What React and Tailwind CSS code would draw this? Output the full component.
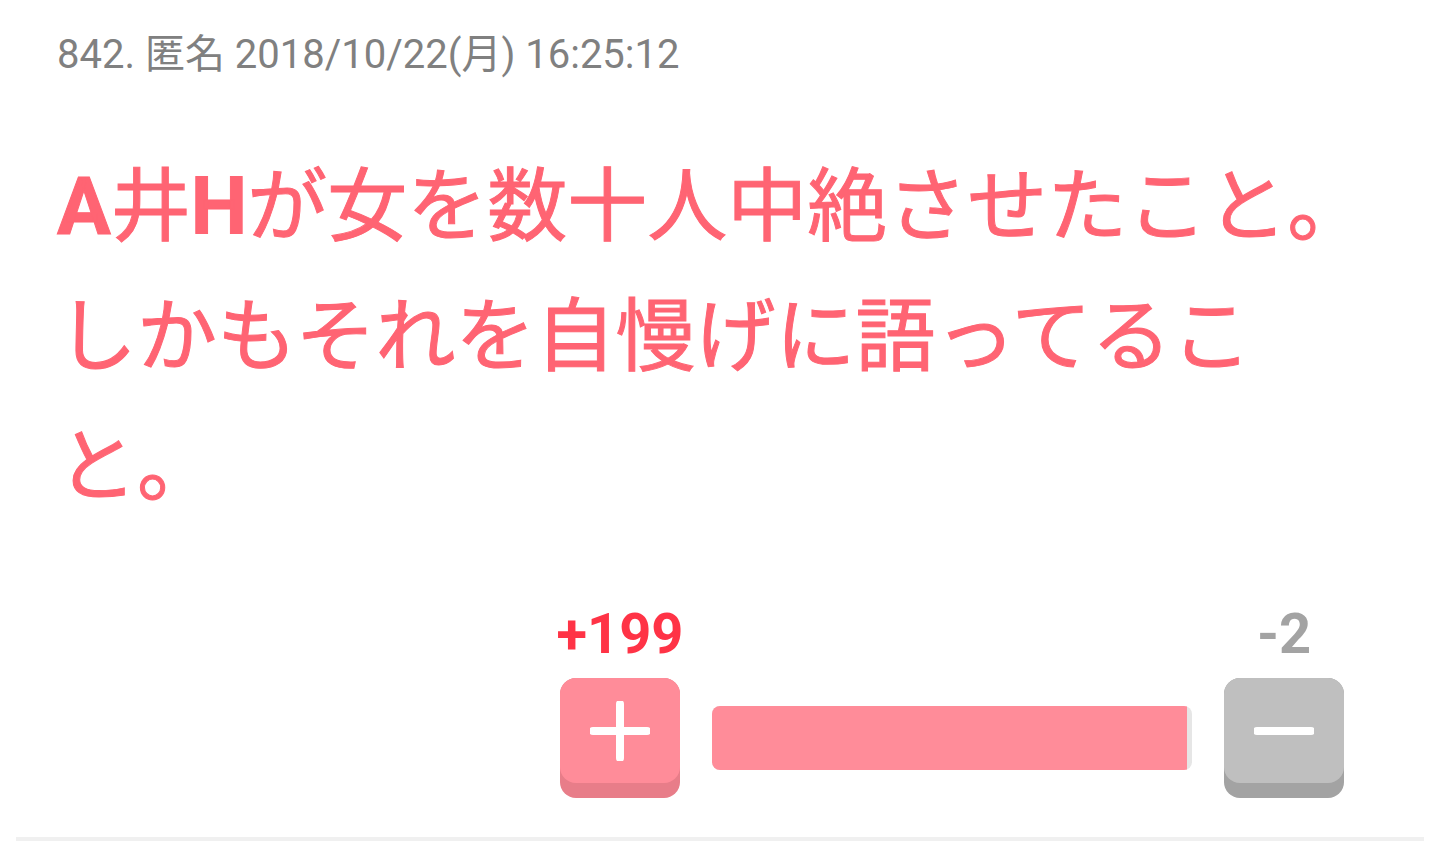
import React from "react";

const post = {
  no: 842,
  name: "匿名",
  date: "2018/10/22(月) 16:25:12",
  plus: 199,
  minus: 2,
};

const VoteButton = ({ kind }) => {
  const isPlus = kind === "plus";
  return (
    <button
      className={`w-[120px] h-[120px] rounded-[16px] pb-[15px] ${
        isPlus ? "bg-[#e87d89]" : "bg-[#a3a3a3]"
      }`}
    >
      <div
        className={`w-full h-full rounded-[16px] flex items-center justify-center ${
          isPlus ? "bg-[#ff8c99]" : "bg-[#bfbfbf]"
        }`}
      >
        <svg width="60" height="60" viewBox="0 0 60 60">
          {isPlus && (
            <line x1="30" y1="3" x2="30" y2="57" stroke="#fff" strokeWidth="8" strokeLinecap="round" />
          )}
          <line x1="3" y1="30" x2="57" y2="30" stroke="#fff" strokeWidth="8" strokeLinecap="round" />
        </svg>
      </div>
    </button>
  );
};

const Latin = ({ children }) => (
  <span className="font-bold leading-[0] font-['Roboto',sans-serif]">{children}</span>
);

export default function App() {
  const ratio = post.plus / (post.plus + post.minus);

  return (
    <div className="w-[1440px] h-[844px] bg-white overflow-hidden">
      <div className="mx-[16px] border-b-[4px] border-[#f0f0f0] h-[841px] flex flex-col">
        <div className="px-[41px] pt-[30px]">
          <p className="text-[40px] leading-[50px] text-[#808080] font-['Roboto','Noto_Sans_CJK_JP',sans-serif]">
            {post.no}. {post.name} {post.date}
          </p>
          {/* latin letters come out bold, kana/kanji a medium weight */}
          <p className="mt-[54px] text-[80px] leading-[130px] text-[#ff6473] [-webkit-text-stroke:1px_#ff6473] font-['Noto_Sans_CJK_JP',sans-serif]">
            <Latin>A</Latin>井<Latin>H</Latin>
            が女を数十人中絶させたこと。しかもそれを自慢げに語ってること。
          </p>
        </div>

        <div className="mt-[78px] flex justify-end gap-[32px] pr-[80px] items-end">
          <div className="w-[120px] flex flex-col items-center">
            <span className="text-[56px] leading-[64px] font-bold text-[#ff3346] font-['Roboto',sans-serif] mb-[12px] whitespace-nowrap">
              +{post.plus}
            </span>
            <VoteButton kind="plus" />
          </div>
          <div className="w-[480px] h-[64px] mb-[28px] rounded-[8px] bg-[#e6e6e6] overflow-hidden">
            <div className="h-full bg-[#ff8c99]" style={{ width: `${ratio * 100}%` }} />
          </div>
          <div className="w-[120px] flex flex-col items-center">
            <span className="text-[56px] leading-[64px] font-bold text-[#a3a3a3] font-['Roboto',sans-serif] mb-[12px] whitespace-nowrap">
              -{post.minus}
            </span>
            <VoteButton kind="minus" />
          </div>
        </div>
      </div>
    </div>
  );
}
